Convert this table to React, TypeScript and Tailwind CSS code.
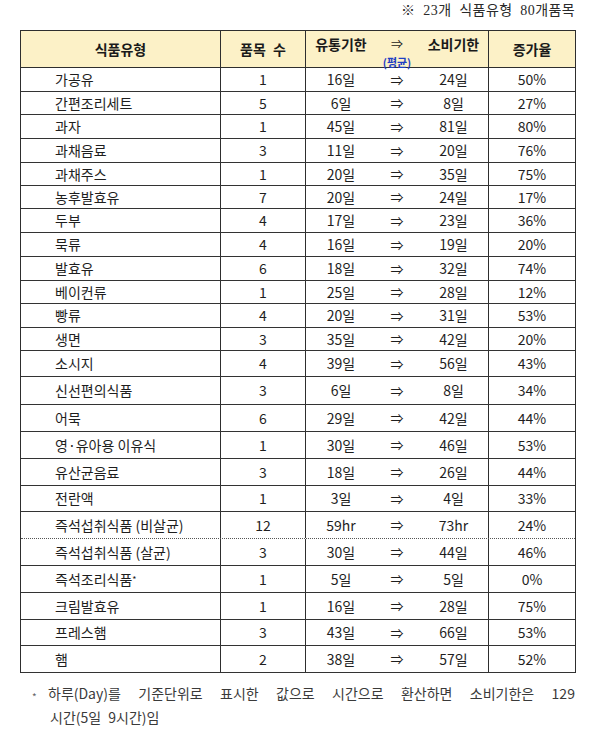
import React from "react";

type Row = {
  name: React.ReactNode;
  count: string;
  from: string;
  to: string;
  rate: string;
  h: string;
  dotted?: boolean;
};

const rows: Row[] = [
  { name: "가공유", count: "1", from: "16일", to: "24일", rate: "50%", h: "h-[24px]" },
  { name: "간편조리세트", count: "5", from: "6일", to: "8일", rate: "27%", h: "h-[23px]" },
  { name: "과자", count: "1", from: "45일", to: "81일", rate: "80%", h: "h-[24px]" },
  { name: "과채음료", count: "3", from: "11일", to: "20일", rate: "76%", h: "h-[24px]" },
  { name: "과채주스", count: "1", from: "20일", to: "35일", rate: "75%", h: "h-[23px]" },
  { name: "농후발효유", count: "7", from: "20일", to: "24일", rate: "17%", h: "h-[23px]" },
  { name: "두부", count: "4", from: "17일", to: "23일", rate: "36%", h: "h-[24px]" },
  { name: "묵류", count: "4", from: "16일", to: "19일", rate: "20%", h: "h-[24px]" },
  { name: "발효유", count: "6", from: "18일", to: "32일", rate: "74%", h: "h-[24px]" },
  { name: "베이컨류", count: "1", from: "25일", to: "28일", rate: "12%", h: "h-[23px]" },
  { name: "빵류", count: "4", from: "20일", to: "31일", rate: "53%", h: "h-[24px]" },
  { name: "생면", count: "3", from: "35일", to: "42일", rate: "20%", h: "h-[23px]" },
  { name: "소시지", count: "4", from: "39일", to: "56일", rate: "43%", h: "h-[26px]" },
  { name: "신선편의식품", count: "3", from: "6일", to: "8일", rate: "34%", h: "h-[28px]" },
  { name: "어묵", count: "6", from: "29일", to: "42일", rate: "44%", h: "h-[27px]" },
  { name: "영·유아용 이유식", count: "1", from: "30일", to: "46일", rate: "53%", h: "h-[27px]" },
  { name: "유산균음료", count: "3", from: "18일", to: "26일", rate: "44%", h: "h-[27px]" },
  { name: "전란액", count: "1", from: "3일", to: "4일", rate: "33%", h: "h-[26px]" },
  { name: "즉석섭취식품 (비살균)", count: "12", from: "59hr", to: "73hr", rate: "24%", h: "h-[27px]", dotted: true },
  { name: "즉석섭취식품 (살균)", count: "3", from: "30일", to: "44일", rate: "46%", h: "h-[27px]" },
  {
    name: (
      <span>
        즉석조리식품<sup className="text-[9px] relative -top-[2px]">*</sup>
      </span>
    ),
    count: "1",
    from: "5일",
    to: "5일",
    rate: "0%",
    h: "h-[27px]",
  },
  { name: "크림발효유", count: "1", from: "16일", to: "28일", rate: "75%", h: "h-[27px]" },
  { name: "프레스햄", count: "3", from: "43일", to: "66일", rate: "53%", h: "h-[26px]" },
  { name: "햄", count: "2", from: "38일", to: "57일", rate: "52%", h: "h-[27px]" },
];

const footWords = ["하루(Day)를", "기준단위로", "표시한", "값으로", "시간으로", "환산하면", "소비기한은", "129"];

export default function App() {
  return (
    <div
      className="w-[600px] h-[733px] bg-white text-[#1e1e1e] overflow-hidden"
      style={{ fontFamily: '"Noto Sans CJK KR", "Noto Sans", sans-serif' }}
    >
      <div
        className="pt-[1px] pr-[25px] text-right text-[14px] leading-[20px] text-[#2a2a2a] tracking-[0.4px] [word-spacing:4px]"
        style={{ fontFamily: '"Liberation Serif", "Noto Sans CJK KR", serif' }}
      >
        ※ 23개 식품유형 80개품목
      </div>

      <div className="mt-[9px] ml-[20px] w-[556px] border-t border-l border-r border-[#2e2e2e]">
        {/* header */}
        <div className="flex h-[37px] bg-[#fcf1c7] border-b border-[#2e2e2e] font-bold text-[14px] text-[#1a1a1a]">
          <div className="w-[200px] border-r border-[#2e2e2e] flex items-center justify-center">식품유형</div>
          <div className="w-[85px] border-r border-[#2e2e2e] flex items-center justify-center [word-spacing:4px]">
            품목 수
          </div>
          <div className="w-[183px] border-r border-[#2e2e2e] flex flex-col pt-[4px]">
            <div className="grid grid-cols-[70px_42px_71px] items-center h-[18px] leading-[18px]">
              <span className="text-center">유통기한</span>
              <span className="text-center font-normal text-[12px] leading-[14px]">⇒</span>
              <span className="text-center">소비기한</span>
            </div>
            <div className="mt-[3px] text-center text-[11px] leading-[12px] text-[#1f3fc4]">(평균)</div>
          </div>
          <div className="flex-1 flex items-center justify-center">증가율</div>
        </div>

        {rows.map((r, i) => (
          <div
            key={i}
            className={`flex ${r.h} text-[14px] ${
              r.dotted ? "border-b border-dotted border-[#555]" : "border-b border-[#333]"
            }`}
          >
            <div className="w-[200px] border-r border-[#2e2e2e] flex items-center pl-[34px]">{r.name}</div>
            <div className="w-[85px] border-r border-[#2e2e2e] flex items-center justify-center">{r.count}</div>
            <div className="w-[183px] border-r border-[#2e2e2e] grid grid-cols-[70px_42px_71px] items-center">
              <span className="text-center">{r.from}</span>
              <span className="text-center text-[13px]">⇒</span>
              <span className="text-center">{r.to}</span>
            </div>
            <div className="flex-1 flex items-center justify-center">{r.rate}</div>
          </div>
        ))}
      </div>

      <div className="mt-[8px] text-[14px] text-[#3a3a3a]">
        <div className="flex items-center h-[24px] pl-[32px] pr-[25px]">
          <span className="w-[16px] text-[10px] text-[#666] relative top-[3px]">*</span>
          <div className="flex-1 flex justify-between">
            {footWords.map((w) => (
              <span key={w}>{w}</span>
            ))}
          </div>
        </div>
        <div className="h-[24px] leading-[24px] pl-[50px] [word-spacing:4px]">시간(5일 9시간)임</div>
      </div>
    </div>
  );
}
